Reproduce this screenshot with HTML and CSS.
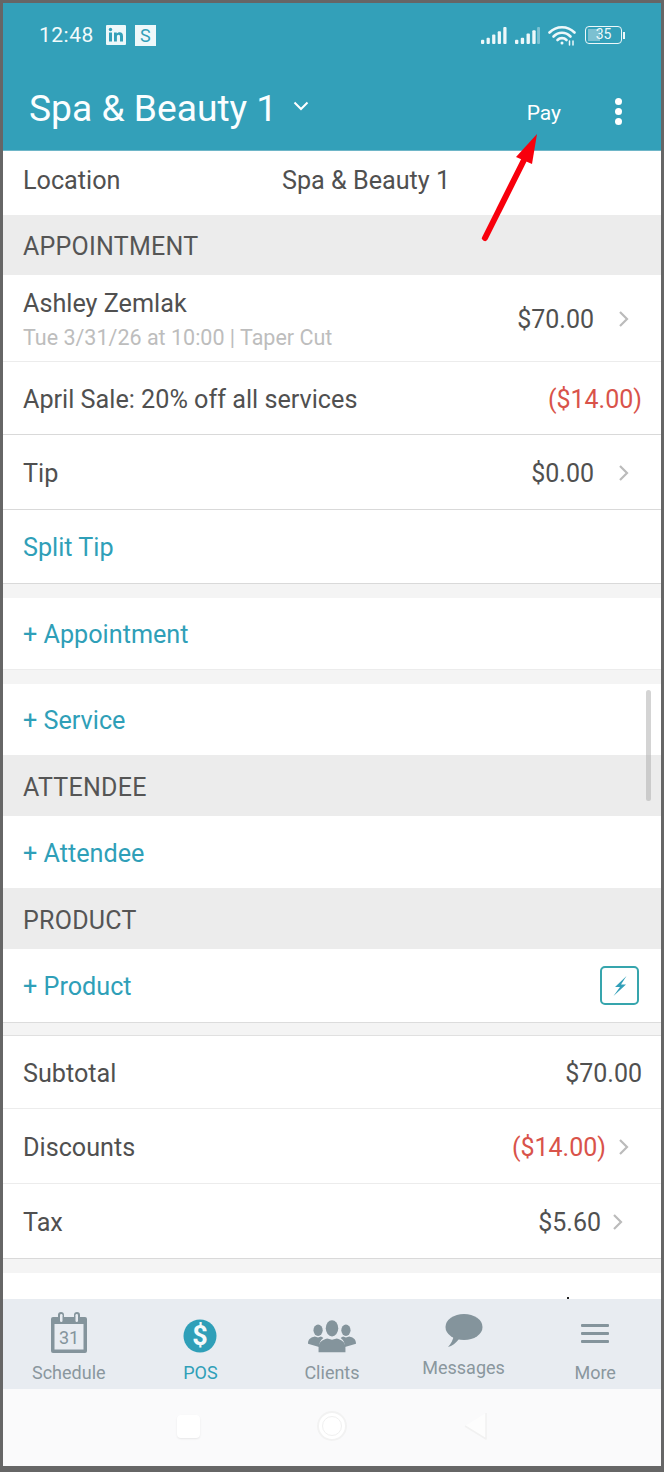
FILE: index.html
```html
<!DOCTYPE html>
<html lang="en">
<head>
    <meta charset="UTF-8">
    <meta name="viewport" content="width=device-width, initial-scale=1.0">
    <title>POS</title>
    <link rel="stylesheet" href="styles.css">
</head>
<body>
    <div class="phone">
        <header class="header">
            <div class="status-bar">
                <span class="clock">12:48</span>
                <svg class="note-icon" width="20" height="20" viewBox="0 0 20 20">
                    <rect width="20" height="20" rx="1" fill="#eef8fa"/>
                    <rect x="3" y="7.500" width="3" height="9" fill="#33a0b9"/>
                    <circle cx="4.500" cy="4.500" r="1.700" fill="#33a0b9"/>
                    <path d="M8 7.500h2.800v1.300c.6-1 1.600-1.500 2.800-1.500 2.300 0 3.400 1.400 3.400 3.900v5.300h-3v-4.800c0-1.200-.4-1.900-1.400-1.900-1.100 0-1.700.8-1.700 2v4.700H8z" fill="#33a0b9"/>
                </svg>
                <span class="note-s">S</span>
                <div class="status-right">
                    <svg width="26" height="17" viewBox="0 0 28 16" preserveAspectRatio="none" fill="#eef8fa">
                        <rect x="0" y="12" width="3.500" height="4" rx="1"/>
                        <rect x="6" y="10" width="3.500" height="6" rx="1"/>
                        <rect x="12" y="7" width="3.500" height="9" rx="1"/>
                        <rect x="18" y="4" width="3.500" height="12" rx="1"/>
                        <rect x="24" y="0" width="3.500" height="16" rx="1"/>
                    </svg>
                    <svg width="25" height="17" viewBox="0 0 26 16" preserveAspectRatio="none" fill="#eef8fa">
                        <rect x="0" y="12" width="3.500" height="4" rx="1"/>
                        <rect x="6" y="10" width="3.500" height="6" rx="1"/>
                        <rect x="12" y="6" width="3.500" height="10" rx="1"/>
                        <rect x="18" y="3" width="3.500" height="13" rx="1"/>
                        <rect x="23" y="0" width="3" height="16" rx="1" opacity=".4"/>
                    </svg>
                    <svg class="wifi" width="28" height="21" viewBox="0 0 28 21" fill="none" stroke="#eef8fa" stroke-width="2.600" stroke-linecap="round">
                        <path d="M1.500 7.500C8.500 .5 19.500 .5 26.500 7.500"/>
                        <path d="M5.500 11.500C10.500 6.500 17.500 6.500 22.500 11.500"/>
                        <path d="M9.500 15C12 12.500 16 12.500 18.500 15"/>
                        <circle cx="14" cy="18" r="1.500" fill="#eef8fa" stroke="none"/>
                        <path d="M21.500 20v-4M25 20v-4" stroke-width="1.500"/>
                    </svg>
                    <div class="battery">
                        <div class="battery-fill"></div>
                        <span class="battery-level">35</span>
                    </div>
                    <div class="battery-tip"></div>
                </div>
            </div>
            <div class="app-bar">
                <span class="app-title">Spa &amp; Beauty 1</span>
                <svg class="title-caret" width="16" height="10" viewBox="0 0 16 10" fill="none" stroke="#fff" stroke-width="2">
                    <path d="M1.500 1.500L8 8l6.500-6.500"/>
                </svg>
                <span class="pay">Pay</span>
                <div class="kebab"><i></i><i></i><i></i></div>
            </div>
        </header>

        <main class="list">
            <div class="row row-location">
                <span class="location-label">Location</span>
                <span>Spa &amp; Beauty 1</span>
            </div>
            <div class="section">APPOINTMENT</div>
            <div class="row row-appt">
                <div class="stack">
                    <span>Ashley Zemlak</span>
                    <span class="sub">Tue 3/31/26 at 10:00 | Taper Cut</span>
                </div>
                <span class="amount">$70.00</span>
                <svg class="chevron" width="12" height="18" viewBox="0 0 12 18"><path d="M2 2l7 7-7 7"/></svg>
            </div>
            <div class="row row-sale line-dark">
                <span>April Sale: 20% off all services</span>
                <span class="amount negative">($14.00)</span>
            </div>
            <div class="row row-tip line-dark">
                <span>Tip</span>
                <span class="amount">$0.00</span>
                <svg class="chevron" width="12" height="18" viewBox="0 0 12 18"><path d="M2 2l7 7-7 7"/></svg>
            </div>
            <div class="row row-split line-dark link">Split Tip</div>
            <div class="gap gap-first"></div>
            <div class="row row-add link">+ Appointment</div>
            <div class="gap gap-plain"></div>
            <div class="row row-add link">+ Service</div>
            <div class="section section-tall">ATTENDEE</div>
            <div class="row row-attendee link">+ Attendee</div>
            <div class="section section-tall">PRODUCT</div>
            <div class="row row-product link">
                <span>+ Product</span>
                <div class="quick-add">
                    <svg width="14" height="20" viewBox="0 0 14 20"><path d="M13.500 0L2 11h5L.5 20 13 8.500H8z" fill="#33a0b9"/></svg>
                </div>
            </div>
            <div class="gap"></div>
            <div class="row row-total">
                <span>Subtotal</span>
                <span class="amount">$70.00</span>
            </div>
            <div class="row row-discount">
                <span>Discounts</span>
                <span class="amount negative">($14.00)</span>
                <svg class="chevron" width="12" height="18" viewBox="0 0 12 18"><path d="M2 2l7 7-7 7"/></svg>
            </div>
            <div class="row row-tax line-dark">
                <span>Tax</span>
                <span class="amount">$5.60</span>
                <svg class="chevron" width="12" height="18" viewBox="0 0 12 18"><path d="M2 2l7 7-7 7"/></svg>
            </div>
            <div class="gap gap-last"></div>
            <div class="row-cut"><i></i></div>
        </main>

        <nav class="tabs">
            <div class="tab">
                <div class="tab-icon">
                    <svg width="38" height="42" viewBox="0 0 38 42">
                        <path d="M3 6h5V4a3 3 0 0 1 6 0v2h10V4a3 3 0 0 1 6 0v2h5a2 2 0 0 1 2 2v32a2 2 0 0 1-2 2H3a2 2 0 0 1-2-2V8a2 2 0 0 1 2-2z" fill="#84949c"/>
                        <rect x="10" y="3" width="2.500" height="8" rx="1.200" fill="#e8ecf1"/>
                        <rect x="25.500" y="3" width="2.500" height="8" rx="1.200" fill="#e8ecf1"/>
                        <rect x="4.500" y="13" width="29" height="25.500" fill="#e8ecf1"/>
                        <text x="19" y="33" class="cal-day" text-anchor="middle">31</text>
                    </svg>
                </div>
                <span>Schedule</span>
            </div>
            <div class="tab tab-active">
                <div class="tab-icon">
                    <svg width="34" height="34" viewBox="0 0 34 34">
                        <circle cx="17" cy="17" r="16.500" fill="#2f9fb8"/>
                        <text x="17" y="26" class="pos-dollar" text-anchor="middle">$</text>
                    </svg>
                </div>
                <span>POS</span>
            </div>
            <div class="tab">
                <div class="tab-icon">
                    <svg width="48" height="34" viewBox="0 0 50 34" fill="#84949c">
                        <ellipse cx="10.500" cy="11" rx="4.800" ry="6"/>
                        <path d="M0 25c0-5 3-6.500 7-7.500l3.500 1 3-1c1 .5 2 1 2.500 1.500-3 2-4.500 5-4.500 9.500z"/>
                        <ellipse cx="39.500" cy="11" rx="4.800" ry="6"/>
                        <path d="M50 25c0-5-3-6.500-7-7.500l-3.500 1-3-1c-1 .5-2 1-2.500 1.500 3 2 4.500 5 4.500 9.500z"/>
                        <ellipse cx="25" cy="9" rx="6.500" ry="8.500"/>
                        <path d="M11 34v-5c0-6 4-8 9-9.500l5 1.500 5-1.500c5 1.500 9 3.500 9 9.500v5z"/>
                    </svg>
                </div>
                <span>Clients</span>
            </div>
            <div class="tab tab-raised">
                <div class="tab-icon">
                    <svg width="38" height="34" viewBox="0 0 38 34" fill="#84949c">
                        <ellipse cx="19" cy="13" rx="18.500" ry="13"/>
                        <path d="M9 21l5 4c-3 4-7 7-11 8 3-3 5-7 6-12z"/>
                    </svg>
                </div>
                <span>Messages</span>
            </div>
            <div class="tab">
                <div class="tab-icon">
                    <div class="menu-icon"><i></i><i></i><i></i></div>
                </div>
                <span>More</span>
            </div>
        </nav>

        <div class="system-nav">
            <div class="sys-square"></div>
            <div class="sys-circle"><div></div></div>
            <svg class="sys-back" width="23" height="28" viewBox="0 0 23 28">
                <path d="M22 1v26L1 14z" fill="#fdfdfd"/>
                <path d="M22 1v26L1 14" fill="none" stroke="#f1f1f1" stroke-width="1.500" stroke-linejoin="round"/>
            </svg>
        </div>

        <div class="scrollbar"></div>
        <svg class="pointer" width="70" height="120" viewBox="0 0 70 120">
            <path d="M4 105L43 27" stroke="#f8000c" stroke-width="6" stroke-linecap="round" fill="none"/>
            <path d="M56 1L35 24l16 7z" fill="#f8000c"/>
        </svg>
    </div>
</body>
</html>
```

FILE: styles.css
```css
* {
    box-sizing: border-box;
}
body {
    margin: 0;
    background: #666;
    font-family: 'Roboto', sans-serif;
    color: #505050;
}
.phone {
    position: relative;
    width: 658px;
    height: 1463px;
    margin: 3px 3px 6px 3px;
    background: #fff;
    display: flex;
    flex-direction: column;
    overflow: hidden;
}

/* header */
.header {
    height: 148px;
    background: #33a0b9;
    border-bottom: 1px solid #6eb6c8;
    color: #fff;
}
.status-bar {
    display: flex;
    align-items: center;
    height: 64px;
    padding: 0 36px 0 36px;
}
.clock {
    font-size: 21px;
    letter-spacing: 0.5px;
    color: #f2fafb;
    margin-right: 12px;
}
.note-s {
    width: 21px;
    height: 21px;
    margin-left: 9px;
    background: #eef8fa;
    color: #33a0b9;
    font-size: 18px;
    line-height: 21px;
    text-align: center;
}
.status-right {
    margin-left: auto;
    display: flex;
    align-items: center;
    gap: 8px;
}
.wifi {
    margin-right: 1px;
}
.battery {
    position: relative;
    width: 37px;
    height: 18px;
    border: 1.5px solid #eef8fa;
    border-radius: 4px;
    overflow: hidden;
}
.battery-fill {
    position: absolute;
    left: 2px;
    top: 2px;
    bottom: 2px;
    width: 12px;
    background: #7cc0d1;
}
.battery-level {
    position: absolute;
    left: 0;
    right: 0;
    top: 0;
    text-align: center;
    font-size: 14px;
    line-height: 15px;
    color: #eef8fa;
}
.battery-tip {
    width: 2px;
    height: 7px;
    margin-left: -7px;
    background: #eef8fa;
}
.app-bar {
    display: flex;
    align-items: center;
    height: 83px;
    padding: 0 0 2px 26px;
}
.app-title {
    font-size: 37.2px;
    color: #fbfeff;
}
.title-caret {
    margin-left: 16px;
    margin-bottom: 4px;
}
.pay {
    margin-left: auto;
    margin-right: 54px;
    font-size: 21px;
    padding-top: 10px;
}
.kebab {
    display: flex;
    flex-direction: column;
    gap: 3px;
    margin-right: 39px;
    padding-top: 8px;
}
.kebab i {
    display: block;
    width: 7px;
    height: 7px;
    border-radius: 50%;
    background: #fff;
}

/* list rows */
.list {
    flex: 1;
    min-height: 0;
}
.row {
    display: flex;
    align-items: center;
    padding: 2px 19px 0 20px;
    background: #fff;
    border-bottom: 1px solid #ececec;
    font-size: 25.2px;
    white-space: nowrap;
}
.line-dark {
    border-bottom-color: #d9d9d9;
}
.row-location {
    height: 65px;
    padding-top: 0;
    padding-bottom: 6px;
}
.location-label {
    width: 259px;
}
.section {
    display: flex;
    align-items: center;
    height: 59px;
    padding: 2px 0 0 20px;
    background: #ececec;
    font-size: 25px;
    letter-spacing: 0.25px;
    color: #555;
}
.section-tall {
    height: 60px;
}
.row-appt {
    height: 87px;
}
.stack {
    display: flex;
    flex-direction: column;
    gap: 7px;
}
.sub {
    font-size: 21.5px;
    color: #bdbdbd;
}
.row-sale {
    height: 73px;
}
.row-tip {
    height: 75px;
}
.row-split {
    height: 74px;
}
.row-add {
    height: 72px;
}
.row-attendee {
    height: 73px;
}
.row-product {
    height: 74px;
    border-bottom-color: #dcdcdc;
}
.row-total {
    height: 73px;
}
.row-discount,
.row-tax {
    height: 75px;
}
.row-cut {
    display: flex;
    align-items: flex-end;
    justify-content: flex-end;
    height: 26px;
    padding-right: 92px;
}
.row-cut i {
    display: block;
    width: 2px;
    height: 2px;
    background: #222;
}
.link {
    color: #2f9fb8;
}
.amount {
    margin-left: auto;
    font-size: 25px;
}
.negative {
    color: #d9534a;
}
.chevron {
    margin-left: 24px;
    margin-right: 12px;
    fill: none;
    stroke: #bbb;
    stroke-width: 2.2;
}
.row-discount .chevron {
    margin-left: 12px;
}
.row-tax .chevron {
    margin-left: 11px;
    margin-right: 18px;
}
.gap {
    height: 13px;
    background: #f4f4f4;
    border-bottom: 1px solid #e0e0e0;
}
.gap-first,
.gap-plain,
.gap-last {
    height: 14px;
    border-bottom: 0;
}
.quick-add {
    display: flex;
    align-items: center;
    justify-content: center;
    width: 39px;
    height: 39px;
    margin-left: auto;
    margin-right: 3px;
    margin-top: -2px;
    border: 2px solid #36a5ad;
    border-radius: 5px;
}

/* bottom tabs */
.tabs {
    display: flex;
    height: 90px;
    background: #e8ecf1;
}
.tab {
    flex: 1;
    display: flex;
    flex-direction: column;
    align-items: center;
    color: #8a979e;
    font-size: 18px;
}
.tab-icon {
    display: flex;
    align-items: flex-end;
    justify-content: center;
    height: 54px;
    margin-bottom: 9px;
}
.tab-active {
    color: #2f9fb8;
}
.tab-raised .tab-icon {
    height: 49px;
    margin-bottom: 9px;
}
.cal-day {
    font-family: 'Roboto', sans-serif;
    font-size: 18px;
    fill: #84949c;
}
.pos-dollar {
    font-family: 'Roboto', sans-serif;
    font-weight: 700;
    font-size: 27px;
    fill: #f4fafb;
}
.menu-icon {
    display: flex;
    flex-direction: column;
    gap: 5px;
    margin-bottom: 10px;
}
.menu-icon i {
    display: block;
    width: 28px;
    height: 3px;
    border-radius: 1px;
    background: #84949c;
}

/* system navigation */
.system-nav {
    display: flex;
    align-items: center;
    justify-content: center;
    gap: 117px;
    height: 77px;
    background: #fafafb;
    padding-bottom: 3px;
}
.sys-square {
    width: 23px;
    height: 23px;
    border-radius: 4px;
    background: #fff;
    box-shadow: 0 1px 2px rgba(0, 0, 0, 0.08);
}
.sys-circle {
    display: flex;
    align-items: center;
    justify-content: center;
    width: 30px;
    height: 30px;
    border: 2px solid #f2f2f2;
    border-radius: 50%;
    background: #fff;
}
.sys-circle div {
    width: 20px;
    height: 20px;
    border: 1px solid #f0f0f0;
    border-radius: 50%;
}

/* floating bits over the list */
.scrollbar {
    position: absolute;
    left: 643px;
    top: 687px;
    width: 5px;
    height: 111px;
    border-radius: 3px;
    background: rgba(170, 170, 170, 0.5);
}
.pointer {
    position: absolute;
    left: 478px;
    top: 130px;
}
```
